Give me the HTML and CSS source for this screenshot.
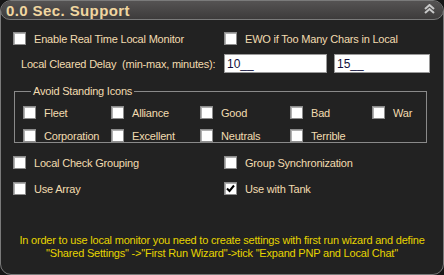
FILE: index.html
```html
<!DOCTYPE html>
<html lang="en">
<head>
    <title>0.0 Sec. Support</title>
    <meta charset="utf-8">
    <link rel="stylesheet" href="styles.css">
</head>
<body>
    <div class="panel">
        <div class="header">
            <span class="title">0.0 Sec. Support</span>
            <svg class="collapse" width="11" height="10" viewBox="0 0 11 10">
                <path d="M1 5 L5.5 1 L10 5 M1 9 L5.5 5 L10 9" fill="none" stroke="#c8c8c8" stroke-width="2"/>
            </svg>
        </div>

        <div class="row two-col first">
            <label class="check"><span class="box"></span>Enable Real Time Local Monitor</label>
            <label class="check"><span class="box"></span>EWO if Too Many Chars in Local</label>
        </div>

        <div class="row delay">
            <span class="delay-label">Local Cleared Delay&nbsp; (min-max, minutes):</span>
            <input class="num first-num" type="text" value="10__">
            <input class="num" type="text" value="15__">
        </div>

        <fieldset class="group">
            <legend>Avoid Standing Icons</legend>
            <div class="standings">
                <label class="check"><span class="box"></span>Fleet</label>
                <label class="check"><span class="box"></span>Alliance</label>
                <label class="check"><span class="box"></span>Good</label>
                <label class="check"><span class="box"></span>Bad</label>
                <label class="check"><span class="box"></span>War</label>
                <label class="check"><span class="box"></span>Corporation</label>
                <label class="check"><span class="box"></span>Excellent</label>
                <label class="check"><span class="box"></span>Neutrals</label>
                <label class="check"><span class="box"></span>Terrible</label>
            </div>
        </fieldset>

        <div class="row two-col lower">
            <label class="check"><span class="box"></span>Local Check Grouping</label>
            <label class="check"><span class="box"></span>Group Synchronization</label>
            <label class="check"><span class="box"></span>Use Array</label>
            <label class="check"><span class="box checked">
                <svg width="9" height="9" viewBox="0 0 9 9"><path d="M1 4.5 L3.5 7 L8 1.5" fill="none" stroke="#000" stroke-width="2"/></svg>
            </span>Use with Tank</label>
        </div>

        <p class="note">In order to use local monitor you need to create settings with first run wizard and define<br>"Shared Settings" -&gt;"First Run Wizard"-&gt;tick "Expand PNP and Local Chat"</p>
    </div>
</body>
</html>
```

FILE: styles.css
```css
* { margin: 0; padding: 0; box-sizing: border-box; }
html, body { width: 444px; height: 275px; }
body {
    background: #161616; overflow: hidden;
    font-family: 'Liberation Sans', Arial, sans-serif; font-size: 11px;
    letter-spacing: -0.2px; color: #f2dcb0;
}
.panel {
    width: 444px; height: 275px; background: #222;
    border: 1px solid #7a7a7a; border-radius: 11px;
    overflow: hidden;
}
.header {
    display: flex; justify-content: space-between; align-items: center;
    height: 20px; margin: -1px -1px 0; padding: 0 8px 0 5px;
    background: linear-gradient(#555353, #3d3b3b);
    border: 1px solid #7a7a7a; border-radius: 11px;
}
.title { font-weight: bold; font-size: 15px; letter-spacing: 0.4px; color: #f0d6a0; }
.collapse { margin-top: -2px; }

.row { display: flex; align-items: center; }
.two-col { display: grid; grid-template-columns: 211px 1fr; padding-left: 12px; }
.first { margin-top: 12px; }

.check { display: flex; align-items: center; gap: 8px; height: 13px; white-space: nowrap; }
.box {
    display: flex; justify-content: center; align-items: center;
    width: 13px; height: 13px; flex: none; background: #fff;
    border: 1px solid #8c8c8c; box-shadow: inset 1px 1px 0 #b0b0b0;
}

.delay { margin-top: 9px; padding-left: 20px; height: 19px; }
.delay-label { width: 203px; white-space: nowrap; }
.num {
    width: 103px; height: 19px; padding: 0 2px;
    border: 1px solid #9a9a9a; background: #fff;
    font-family: 'Liberation Sans', Arial, sans-serif; font-size: 12px; color: #101040;
    outline: none;
}
.first-num { margin-right: 7px; }
.num + .num { width: 96px; }

.group {
    margin: 12px 16px 0 13px; height: 58px;
    border: 1px solid #8a8a8a; padding: 0 0 0 8px;
}
.group legend { margin-left: 8px; padding: 0 2px; line-height: 12px; }
.standings {
    display: grid; grid-template-columns: 88px 89px 90px 82px 1fr;
    row-gap: 10px; margin-top: 9px;
}

.lower { margin-top: 13px; row-gap: 13px; }

.note {
    margin-top: 39px; text-align: center; color: #e6d400;
    line-height: 13px;
}
```
